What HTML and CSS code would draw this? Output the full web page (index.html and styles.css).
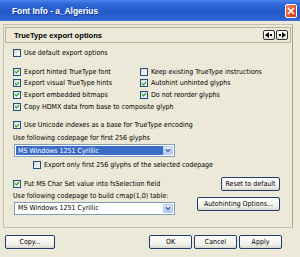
FILE: index.html
```html
<!DOCTYPE html>
<html>
<head>
<meta charset="utf-8">
<link rel="stylesheet" href="styles.css">
</head>
<body>
<div class="win">
  <div class="titlebar">
    <span class="title">Font Info - a_Algerius</span>
    <span class="close"><svg width="8" height="8" viewBox="0 0 8 8"><path d="M1 1L7 7M7 1L1 7" stroke="#fff" stroke-width="1.6"/></svg></span>
  </div>
  <div class="body">
    <div class="panel">
      <div class="hdr">
        <span class="hdr-title">TrueType export options</span>
        <div class="navs">
          <span class="nav"><svg width="8" height="6" viewBox="0 0 8 6"><path d="M0 3L4 0V6Z" fill="#000"/><rect x="5" y="2" width="2" height="2" fill="#000"/></svg></span>
          <span class="nav"><svg width="8" height="6" viewBox="0 0 8 6"><rect x="1" y="2" width="2" height="2" fill="#000"/><path d="M8 3L4 0V6Z" fill="#000"/></svg></span>
        </div>
      </div>
      <div class="opts">
        <div class="row r-default"><span class="cb"></span><span>Use default export options</span></div>
        <div class="grid2">
          <div class="row"><span class="cb on"><svg viewBox="0 0 8 8"><path d="M1.5 4L3.3 5.8L6.6 2.2" fill="none" stroke="#21a121" stroke-width="1.5"/></svg></span><span>Export hinted TrueType font</span></div>
          <div class="row"><span class="cb"></span><span>Keep existing TrueType instructions</span></div>
          <div class="row"><span class="cb on"><svg viewBox="0 0 8 8"><path d="M1.5 4L3.3 5.8L6.6 2.2" fill="none" stroke="#21a121" stroke-width="1.5"/></svg></span><span>Export visual TrueType hints</span></div>
          <div class="row"><span class="cb on"><svg viewBox="0 0 8 8"><path d="M1.5 4L3.3 5.8L6.6 2.2" fill="none" stroke="#21a121" stroke-width="1.5"/></svg></span><span>Autohint unhinted glyphs</span></div>
          <div class="row"><span class="cb on"><svg viewBox="0 0 8 8"><path d="M1.5 4L3.3 5.8L6.6 2.2" fill="none" stroke="#21a121" stroke-width="1.5"/></svg></span><span>Export embedded bitmaps</span></div>
          <div class="row"><span class="cb on"><svg viewBox="0 0 8 8"><path d="M1.5 4L3.3 5.8L6.6 2.2" fill="none" stroke="#21a121" stroke-width="1.5"/></svg></span><span>Do not reorder glyphs</span></div>
          <div class="row span2"><span class="cb on"><svg viewBox="0 0 8 8"><path d="M1.5 4L3.3 5.8L6.6 2.2" fill="none" stroke="#21a121" stroke-width="1.5"/></svg></span><span>Copy HDMX data from base to composite glyph</span></div>
        </div>
        <div class="row r-unicode"><span class="cb on"><svg viewBox="0 0 8 8"><path d="M1.5 4L3.3 5.8L6.6 2.2" fill="none" stroke="#21a121" stroke-width="1.5"/></svg></span><span>Use Unicode indexes as a base for TrueType encoding</span></div>
        <div class="lbl l-first">Use following codepage for first 256 glyphs</div>
        <div class="select focus"><span class="sel-text">MS Windows 1251 Cyrillic</span><span class="sel-btn"><svg width="6" height="5" viewBox="0 0 6 5"><path d="M0.8 1.2L3 3.4L5.2 1.2" fill="none" stroke="#4d6185" stroke-width="1.3"/></svg></span></div>
        <div class="row r-only"><span class="cb"></span><span>Export only first 256 glyphs of the selected codepage</span></div>
        <div class="split s-put">
          <div class="row"><span class="cb on"><svg viewBox="0 0 8 8"><path d="M1.5 4L3.3 5.8L6.6 2.2" fill="none" stroke="#21a121" stroke-width="1.5"/></svg></span><span>Put MS Char Set value into fsSelection field</span></div>
          <span class="btn b-reset">Reset to default</span>
        </div>
        <div class="split s-cmap">
          <div class="col">
            <div class="lbl">Use following codepage to build cmap(1,0) table:</div>
            <div class="select"><span class="sel-text">MS Windows 1251 Cyrillic</span><span class="sel-btn"><svg width="6" height="5" viewBox="0 0 6 5"><path d="M0.8 1.2L3 3.4L5.2 1.2" fill="none" stroke="#4d6185" stroke-width="1.3"/></svg></span></div>
          </div>
          <span class="btn b-auto">Autohinting Options...</span>
        </div>
      </div>
    </div>
    <div class="footer">
      <span class="btn b-copy">Copy...</span>
      <div class="btns">
        <span class="btn b-std">OK</span>
        <span class="btn b-std">Cancel</span>
        <span class="btn b-std">Apply</span>
      </div>
    </div>
  </div>
</div>
</body>
</html>
```
FILE: styles.css
```css
* { box-sizing: border-box; }
html, body { margin: 0; padding: 0; }
body {
  width: 300px; height: 257px; overflow: hidden;
  font-family: "DejaVu Sans Condensed", "Liberation Sans", sans-serif;
  font-size: 7px; color: #000;
  background: #ece9d8;
}
.win { width: 300px; height: 257px; display: flex; flex-direction: column; background: #ece9d8; }
.titlebar {
  height: 21px; flex: none;
  display: flex; align-items: center; justify-content: space-between;
  padding: 0 3px 0 12px;
  background: linear-gradient(#4a86ee 0%, #2f68d8 18%, #2459ca 55%, #2a5fcd 85%, #3a6fd6 100%);
}
.title {
  color: #fff; font-family: "Liberation Sans", sans-serif; font-weight: bold; font-size: 8.4px;
  text-shadow: 1px 1px 0 #1b3f9a; margin-top: 1px;
}
.close {
  width: 12px; height: 14px; margin-top: 1px;
  border: 1px solid #fff; border-radius: 2px;
  background: linear-gradient(135deg, #e98a6e, #d9522c 60%, #c8401c);
  display: flex; align-items: center; justify-content: center;
}
.body { flex: 1; display: flex; flex-direction: column; padding: 3px 7px 0 3px; }
.panel {
  height: 204px; flex: none;
  border: 1px solid #c5c2b2;
  border-right-color: #a9a690;
  display: flex; flex-direction: column;
  padding: 2px 1px 0 1px;
}
.hdr {
  height: 16px; flex: none;
  border: 1px solid #b9b59f;
  display: flex; align-items: center; justify-content: space-between;
  padding: 0 2px 0 8px;
}
.hdr-title { font-family: "Liberation Sans", sans-serif; font-weight: bold; font-size: 7.6px; color: #000; margin-top: 1px; }
.navs { display: flex; gap: 1px; }
.nav {
  width: 12px; height: 10px;
  border: 1px solid #333; border-radius: 2px;
  background: linear-gradient(#fff, #e4e2d8);
  display: flex; align-items: center; justify-content: center;
}
.opts { padding-left: 8px; display: flex; flex-direction: column; }
.row { display: flex; align-items: center; gap: 3px; height: 11.7px; white-space: nowrap; }
.cb {
  width: 8px; height: 8px; flex: none;
  border: 1px solid #1c5180;
  background: linear-gradient(135deg, #dcdad0, #fbfbf8);
  display: flex; align-items: center; justify-content: center;
}
.cb svg { width: 7px; height: 7px; }
.r-default { margin-top: 4px; }
.grid2 { display: grid; grid-template-columns: 127px 1fr; margin-top: 7px; }
.span2 { grid-column: 1 / 3; }
.r-unicode { margin-top: 7px; }
.lbl { height: 11px; line-height: 11px; white-space: nowrap; }
.l-first { margin-top: 2px; }
.select {
  width: 161px; height: 13px;
  border: 1px solid #7f9db9; background: #fff;
  display: flex; align-items: stretch; padding: 1px;
  margin-left: 1px;
}
.sel-text { flex: 1; display: flex; align-items: center; padding-left: 2px; }
.select.focus .sel-text { background: #3a6cc8; color: #fff; }
.sel-btn {
  width: 10px; flex: none;
  background: linear-gradient(#dce7fd, #b5c9f3);
  border: 1px solid #b3c6ef; border-radius: 1px;
  display: flex; align-items: center; justify-content: center;
}
.r-only { margin-top: 2px; margin-left: 20px; }
.split { display: flex; justify-content: space-between; align-items: center; padding-right: 11px; }
.s-put { margin-top: 6px; }
.s-cmap { margin-top: 0px; align-items: flex-start; }
.col { display: flex; flex-direction: column; }
.btn {
  height: 14px; display: flex; align-items: center; justify-content: center;
  border: 1px solid #1e3c6e; border-radius: 2px;
  background: linear-gradient(#fefefd, #f1f0ea 70%, #dcd9cb);
  color: #000; white-space: nowrap;
}
.b-reset { width: 59px; }
.b-auto { width: 83px; margin-top: 6px; }
.footer { display: flex; justify-content: space-between; align-items: center; margin-top: 7px; padding-left: 2px; padding-right: 11px; }
.b-copy { width: 50px; }
.btns { display: flex; gap: 2px; }
.b-std { width: 43px; }
```
